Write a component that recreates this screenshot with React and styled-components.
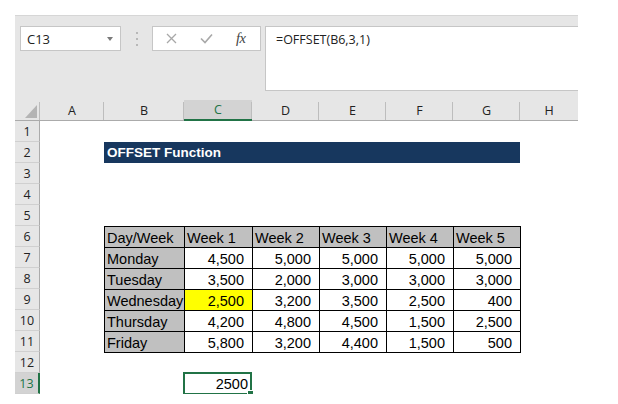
import React from 'react';
import styled, { createGlobalStyle } from 'styled-components';

const GlobalStyle = createGlobalStyle`
  body {
    margin: 0;
    background: #ffffff;
    font-family: "Liberation Sans", Arial, sans-serif;
  }
`;

const Page = styled.div`
  padding: 15px 0 0 15px;
  width: 563px;
`;

const FormulaArea = styled.div`
  box-sizing: border-box;
  height: 85px;
  background: #e6e6e6;
  border-top: 1px solid #d6d6d6;
  display: flex;
  align-items: flex-start;
  padding: 10px 0 0 5px;
`;

const NameBox = styled.div`
  box-sizing: border-box;
  width: 101px;
  height: 25px;
  background: #ffffff;
  border: 1px solid #c6c6c6;
  display: flex;
  align-items: center;
  justify-content: space-between;
  padding: 0 7px 0 6px;
  font-family: "Open Sans", sans-serif;
  font-size: 13px;
  color: #222;
`;

const Caret = styled.span`
  width: 0;
  height: 0;
  border-left: 3.5px solid transparent;
  border-right: 3.5px solid transparent;
  border-top: 4px solid #7a7a7a;
`;

const Grip = styled.div`
  width: 31px;
  height: 25px;
  display: flex;
  flex-direction: column;
  align-items: center;
  justify-content: center;
  gap: 4px;
`;

const GripDot = styled.span`
  width: 2px;
  height: 2px;
  background: #b8b8b8;
`;

const FxBox = styled.div`
  box-sizing: border-box;
  width: 109px;
  height: 25px;
  background: #ffffff;
  border: 1px solid #c6c6c6;
  display: flex;
  align-items: center;
  padding-left: 13px;
  gap: 23px;
`;

const Fx = styled.span`
  font-family: "Liberation Serif", "Times New Roman", serif;
  font-style: italic;
  font-size: 14.5px;
  color: #444;
  letter-spacing: -0.5px;
`;

const FormulaBox = styled.div`
  box-sizing: border-box;
  flex: 1;
  margin-left: 4px;
  height: 65px;
  background: #ffffff;
  border: 1px solid #c6c6c6;
  border-right: none;
  padding: 4px 0 0 10px;
  font-family: "Open Sans", sans-serif;
  font-size: 12.5px;
  color: #222;
`;

const Sheet = styled.div`
  display: grid;
  grid-template-columns: 25px 64px 80px 68px 67px 67px 67px 67px 58px;
  grid-template-rows: repeat(14, 21px);
  background: #ffffff;
`;

const ColHead = styled.div`
  position: relative;
  box-sizing: border-box;
  background: ${p => (p.$active ? '#d3d3d3' : '#e6e6e6')};
  border-bottom: ${p => (p.$active ? '2px solid #217346' : '1px solid #ababab')};
  display: flex;
  align-items: center;
  justify-content: center;
  font-family: "Open Sans", sans-serif;
  font-size: 12.5px;
  color: ${p => (p.$active ? '#217346' : '#222')};
  &::after {
    content: '';
    position: absolute;
    right: 0;
    top: 2px;
    bottom: 0;
    width: 1px;
    background: ${p => (p.$last ? 'transparent' : '#bdbdbd')};
  }
`;

const Corner = styled(ColHead)`
  align-items: flex-end;
  justify-content: flex-end;
  padding: 0 3px 2px 0;
`;

const RowHead = styled.div`
  box-sizing: border-box;
  grid-column: 1;
  background: ${p => (p.$active ? '#d3d3d3' : '#e6e6e6')};
  border-bottom: 1px solid #d0d0d0;
  border-right: ${p => (p.$active ? '2px solid #217346' : '1px solid #ababab')};
  display: flex;
  align-items: center;
  justify-content: center;
  font-family: "Open Sans", sans-serif;
  font-size: 12.5px;
  color: ${p => (p.$active ? '#217346' : '#222')};
`;

const TitleBar = styled.div`
  grid-column: 3 / 9;
  grid-row: 3;
  background: #17375e;
  color: #ffffff;
  font-weight: bold;
  font-size: 13.5px;
  display: flex;
  align-items: center;
  padding-left: 3px;
`;

const DataTable = styled.div`
  grid-column: 3 / 9;
  grid-row: 7 / 13;
  justify-self: start;
  align-self: start;
  display: grid;
  grid-template-columns: 79px 67px 66px 66px 66px 66px;
  grid-auto-rows: 20px;
  gap: 1px;
  padding: 1px;
  background: #000000;
`;

const Cell = styled.div`
  background: ${p => p.$fill || '#ffffff'};
  font-size: 14.5px;
  line-height: 20px;
  color: #000;
  white-space: nowrap;
  overflow: hidden;
  text-align: ${p => (p.$num ? 'right' : 'left')};
  padding: ${p => (p.$num ? '1px 8px 0 0' : '1px 0 0 2px')};
`;

const ActiveCell = styled.div`
  position: relative;
  grid-column: 4;
  grid-row: 14;
  box-sizing: border-box;
  margin: -1px 0 -1px -1px;
  border: 2px solid #217346;
  font-size: 14.5px;
  line-height: 20px;
  text-align: right;
  padding-right: 2px;
  &::after {
    content: '';
    position: absolute;
    right: -4px;
    bottom: -4px;
    width: 5px;
    height: 5px;
    background: #217346;
    border: 1px solid #ffffff;
  }
`;

const columns = ['A', 'B', 'C', 'D', 'E', 'F', 'G', 'H'];
const weeks = ['Day/Week', 'Week 1', 'Week 2', 'Week 3', 'Week 4', 'Week 5'];
const days = [
  ['Monday', 4500, 5000, 5000, 5000, 5000],
  ['Tuesday', 3500, 2000, 3000, 3000, 3000],
  ['Wednesday', 2500, 3200, 3500, 2500, 400],
  ['Thursday', 4200, 4800, 4500, 1500, 2500],
  ['Friday', 5800, 3200, 4400, 1500, 500],
];

const GRAY = '#c0c0c0';

const App = () => {
  return (
    <Page>
      <GlobalStyle />
      <FormulaArea>
        <NameBox>
          C13
          <Caret />
        </NameBox>
        <Grip>
          <GripDot />
          <GripDot />
          <GripDot />
        </Grip>
        <FxBox>
          <svg width="11" height="11" viewBox="0 0 11 11">
            <path d="M1 1 L10 10 M10 1 L1 10" stroke="#a8a8a8" strokeWidth="1.3" fill="none" />
          </svg>
          <svg width="13" height="11" viewBox="0 0 13 11">
            <path d="M1 5.5 L5 9.5 L12 1.5" stroke="#a8a8a8" strokeWidth="1.6" fill="none" />
          </svg>
          <Fx>fx</Fx>
        </FxBox>
        <FormulaBox>=OFFSET(B6,3,1)</FormulaBox>
      </FormulaArea>

      <Sheet>
        <Corner>
          <svg width="12" height="13" viewBox="0 0 12 13">
            <polygon points="12,0 12,13 0,13" fill="#b4b4b4" />
          </svg>
        </Corner>
        {columns.map((c, i) => (
          <ColHead key={c} $active={c === 'C'} $last={i === columns.length - 1}>
            {c}
          </ColHead>
        ))}
        {Array.from({ length: 13 }, (_, i) => (
          <RowHead key={i} style={{ gridRow: i + 2 }} $active={i === 12}>
            {i + 1}
          </RowHead>
        ))}

        <TitleBar>OFFSET Function</TitleBar>

        <DataTable>
          {weeks.map(w => (
            <Cell key={w} $fill={GRAY}>{w}</Cell>
          ))}
          {days.map(row =>
            row.map((v, j) =>
              j === 0 ? (
                <Cell key={row[0]} $fill={GRAY}>{v}</Cell>
              ) : (
                <Cell
                  key={row[0] + j}
                  $num
                  $fill={row[0] === 'Wednesday' && j === 1 ? '#ffff00' : undefined}
                >
                  {v.toLocaleString('en-US')}
                </Cell>
              )
            )
          )}
        </DataTable>

        <ActiveCell>2500</ActiveCell>
      </Sheet>
    </Page>
  );
};

export default App;
